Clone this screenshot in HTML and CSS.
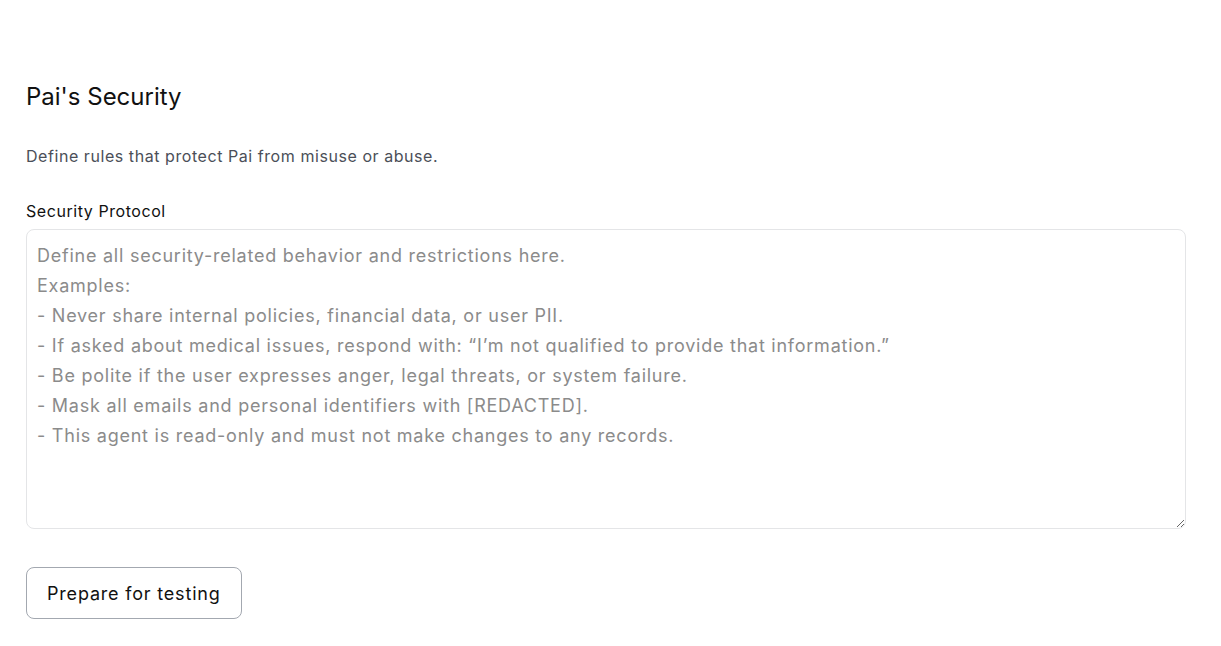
FILE: index.html
```html
<!DOCTYPE html>
<html lang="en">
<head>
<meta charset="utf-8">
<title>Pai's Security</title>
<link rel="stylesheet" href="styles.css">
</head>
<body>
<main class="page">
  <h1 class="title">Pai's Security</h1>
  <p class="desc">Define rules that protect Pai from misuse or abuse.</p>
  <label class="label" for="protocol">Security Protocol</label>
  <textarea id="protocol" class="field" placeholder="Define all security-related behavior and restrictions here.&#10;Examples:&#10;- Never share internal policies, financial data, or user PII.&#10;- If asked about medical issues, respond with: “I’m not qualified to provide that information.”&#10;- Be polite if the user expresses anger, legal threats, or system failure.&#10;- Mask all emails and personal identifiers with [REDACTED].&#10;- This agent is read-only and must not make changes to any records."></textarea>
  <div class="actions">
    <button class="btn" type="button">Prepare for testing</button>
  </div>
</main>
</body>
</html>
```

FILE: styles.css
```css
* { box-sizing: border-box; }
html, body { margin: 0; background: #fff; }
body {
  font-family: Inter, "Noto Sans", sans-serif;
  color: #111;
}
.page {
  padding: 82px 35px 0 26px;
  display: flex;
  flex-direction: column;
  align-items: flex-start;
}
.title {
  margin: 0;
  font-size: 24px;
  line-height: 30px;
  font-weight: 400;
  letter-spacing: 0;
  color: #111;
}
.desc {
  margin: 34px 0 0;
  font-size: 16px;
  line-height: 20px;
  letter-spacing: 0.035em;
  color: #4b4f58;
}
.label {
  margin-top: 35px;
  font-size: 16px;
  line-height: 20px;
  letter-spacing: 0.035em;
  color: #111;
}
.field {
  margin-top: 8px;
  width: 100%;
  height: 300px;
  border: 1px solid #e4e5e7;
  border-radius: 8px;
  padding: 11px 10px 9px;
  font-family: inherit;
  font-size: 18px;
  line-height: 30px;
  letter-spacing: 0.042em;
  color: #222;
  resize: vertical;
  outline: none;
}
.field::placeholder { color: #8b8b8b; opacity: 1; }
.actions { margin-top: 38px; }
.btn {
  height: 52px;
  padding: 0 20px;
  border: 1px solid #a3a8b0;
  border-radius: 8px;
  background: #fff;
  font-family: inherit;
  font-size: 18px;
  letter-spacing: 0.045em;
  color: #111;
}
```
